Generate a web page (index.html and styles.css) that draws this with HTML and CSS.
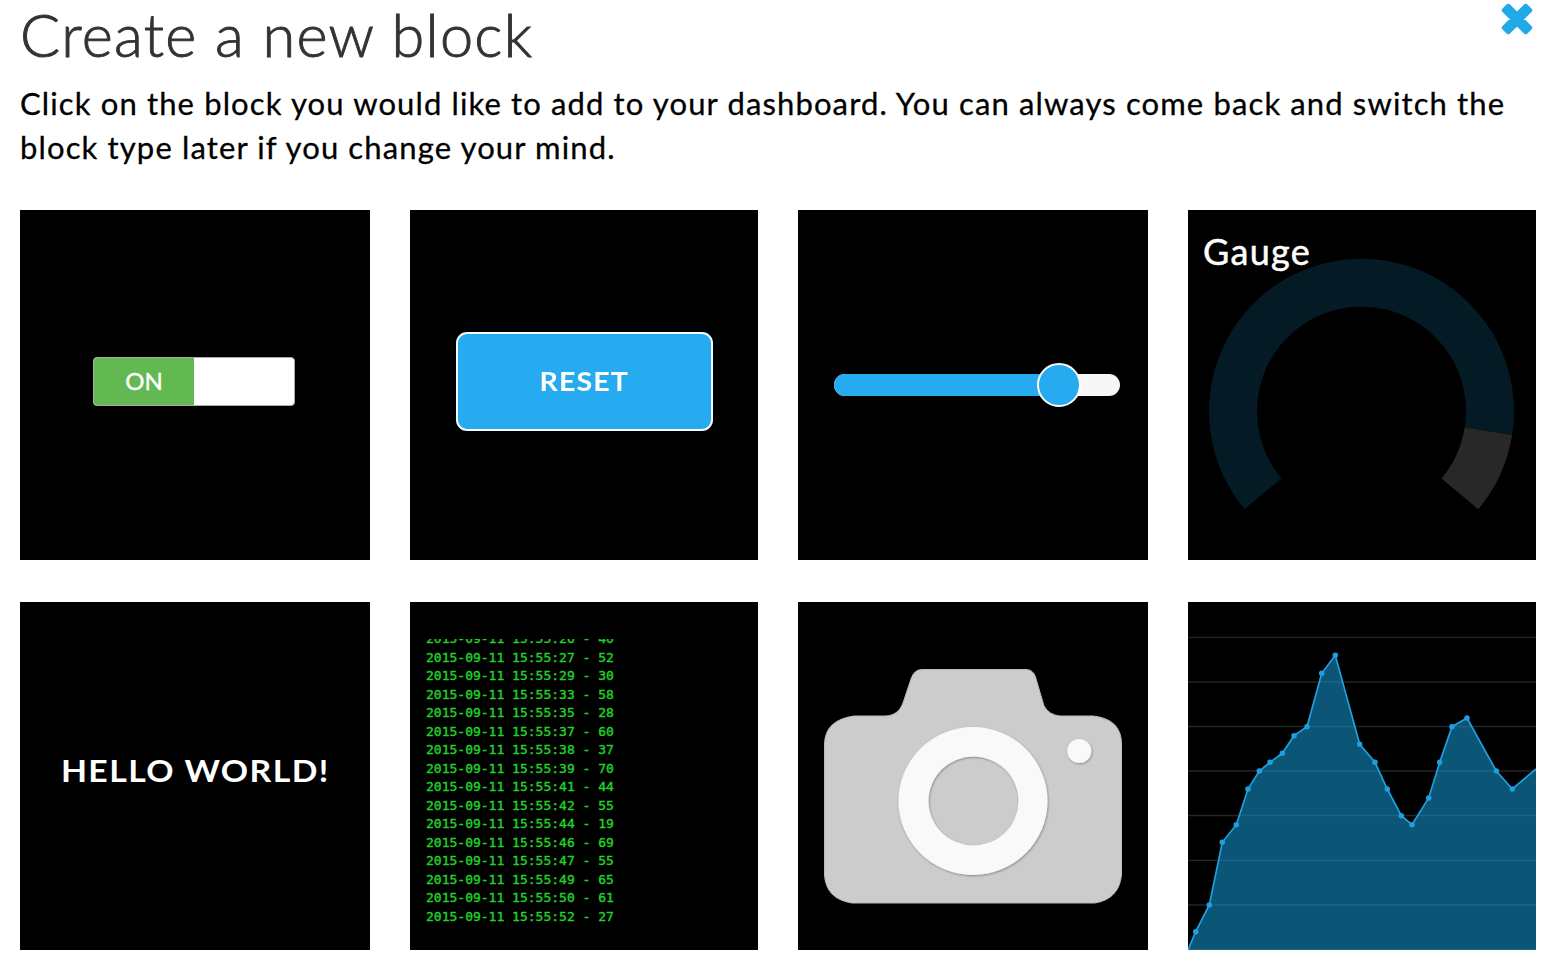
FILE: index.html
```html
<!DOCTYPE html>
<html lang="en">
<head>
<meta charset="utf-8">
<title>Create a new block</title>
<link rel="stylesheet" href="styles.css">
</head>
<body>
<main class="dialog">
  <header class="dialog-head">
    <h1 class="title">Create a new block</h1>
    <button class="close" aria-label="Close">
      <svg width="34" height="34" viewBox="0 0 34 34"><path d="M8.300 4.300 17 13 25.700 4.300 29.700 8.300 21 17 29.700 25.700 25.700 29.700 17 21 8.300 29.700 4.300 25.700 13 17 4.300 8.300Z" fill="#20aae8" stroke="#20aae8" stroke-width="5" stroke-linejoin="round"/></svg>
    </button>
  </header>
  <p class="intro">Click on the block you would like to add to your dashboard. You can always come back and switch the<br>block type later if you change your mind.</p>
  <section class="blocks">
    <div class="block toggle-block">
      <div class="toggle"><span class="toggle-on">ON</span></div>
    </div>
    <div class="block button-block">
      <div class="reset"><span class="reset-label">RESET</span></div>
    </div>
    <div class="block slider-block">
      <div class="track"><div class="fill"></div><div class="thumb"></div></div>
    </div>
    <div class="block gauge-block">
      <svg class="art" viewBox="0 0 348 350">
        <g transform="translate(173.500 201.200)">
          <path fill="#041a24" d="M-116.800 98A152.500 152.500 0 1 1 150.600 23.900L103.200 16.300A104.500 104.500 0 1 0-80 67.200Z"/>
          <path fill="#282828" d="M150.600 23.900A152.500 152.500 0 0 1 116.800 98L80 67.200A104.500 104.500 0 0 0 103.200 16.300Z"/>
        </g>
      </svg>
      <span class="gauge-name">Gauge</span>
    </div>
    <div class="block text-block"><span class="hello">HELLO WORLD!</span></div>
    <div class="block log-block">
      <pre class="log">2015-09-11 15:55:26 - 40
2015-09-11 15:55:27 - 52
2015-09-11 15:55:29 - 30
2015-09-11 15:55:33 - 58
2015-09-11 15:55:35 - 28
2015-09-11 15:55:37 - 60
2015-09-11 15:55:38 - 37
2015-09-11 15:55:39 - 70
2015-09-11 15:55:41 - 44
2015-09-11 15:55:42 - 55
2015-09-11 15:55:44 - 19
2015-09-11 15:55:46 - 69
2015-09-11 15:55:47 - 55
2015-09-11 15:55:49 - 65
2015-09-11 15:55:50 - 61
2015-09-11 15:55:52 - 27</pre>
    </div>
    <div class="block">
      <svg class="art" viewBox="0 0 350 348">
        <defs><filter id="soft" x="-10%" y="-10%" width="120%" height="120%"><feDropShadow dx=".7" dy="1" stdDeviation="1" flood-color="#000" flood-opacity=".35"/></filter></defs>
        <path fill="#ccc" stroke="#b9b9b9" stroke-width="1" d="M56 114H87C96 114 102 109 105 101L113 77Q116 67.500 124 67.500H228Q235 67.500 237.500 75L246 104Q251 113 262 114H295Q323.500 117 323.500 142V273Q321 297 297 301H54Q28 297 26.500 273V142Q27 118 56 114Z"/>
        <path filter="url(#soft)" fill="#f9f9f9" fill-rule="evenodd" d="M100.500 199a74.500 74 0 1 0 149 0a74.500 74 0 1 0-149 0ZM130.500 199a45 44.500 0 1 1 90 0a45 44.500 0 1 1-90 0Z"/>
        <circle filter="url(#soft)" cx="281.300" cy="149" r="12" fill="#f9f9f9"/>
      </svg>
    </div>
    <div class="block">
      <svg class="art" viewBox="0 0 348 348">
        <path stroke="#fff" stroke-opacity=".14" stroke-width="1.300" d="M0 35.300H348M0 80H348M0 124.500H348M0 169H348M0 213.500H348M0 258.300H348M0 303H348M0 347.300H348"/>
        <path fill="#149ad5" fill-opacity=".56" d="M0 348L7.700 329.700 21.300 303 34.300 240.300 48.300 222.700 60 187 71.300 169 82 160.300 94.300 151.300 106 133.700 119 124.700 133.700 71.300 147.300 53.300 171.700 142.300 187 160.300 199.300 187 213.300 213.700 224 222.700 240.700 196 251.700 160.300 264 124.700 279 116 308.300 169 324.300 187 348 167V348Z"/>
        <path class="series" d="M0 348L7.700 329.700 21.300 303 34.300 240.300 48.300 222.700 60 187 71.300 169 82 160.300 94.300 151.300 106 133.700 119 124.700 133.700 71.300 147.300 53.300 171.700 142.300 187 160.300 199.300 187 213.300 213.700 224 222.700 240.700 196 251.700 160.300 264 124.700 279 116 308.300 169 324.300 187 348 167"/>
        <path class="points" d="M7.700 329.700h0M21.300 303h0M34.300 240.300h0M48.300 222.700h0M60 187h0M71.300 169h0M82 160.300h0M94.300 151.300h0M106 133.700h0M119 124.700h0M133.700 71.300h0M147.300 53.300h0M171.700 142.300h0M187 160.300h0M199.300 187h0M213.300 213.700h0M224 222.700h0M240.700 196h0M251.700 160.300h0M264 124.700h0M279 116h0M308.300 169h0M324.300 187h0"/>
      </svg>
    </div>
  </section>
</main>
</body>
</html>
```
FILE: styles.css
```css
* { box-sizing: border-box; }
body {
  margin: 0;
  background: #fff;
  color: #000;
  font-family: Lato, "Liberation Sans", sans-serif;
  overflow: hidden;
}
.dialog { padding: 0 14px 0 20px; }
.dialog-head {
  display: flex;
  justify-content: space-between;
  align-items: flex-start;
  height: 81px;
}
.title {
  margin: 0;
  color: #333;
  font-size: 59.500px;
  font-weight: 300;
  line-height: 69px;
  letter-spacing: 1.250px;
  white-space: nowrap;
  -webkit-text-stroke: 0.900px #333;
}
.close {
  display: flex;
  margin: 2px 2px 0 0;
  padding: 0;
  border: 0;
  background: none;
}
.intro {
  margin: 0;
  height: 129px;
  font-size: 31px;
  line-height: 44px;
  letter-spacing: 1.130px;
  white-space: nowrap;
  -webkit-text-stroke: 0.300px #000;
}
.blocks {
  display: grid;
  grid-template-columns: 350px 348px 350px 348px;
  grid-template-rows: 350px 348px;
  column-gap: 40px;
  row-gap: 42px;
}
.blocks > :nth-child(4n + 3) { margin-left: 0; }
.block {
  position: relative;
  display: flex;
  overflow: hidden;
  background: #000;
  color: #fff;
}
.art {
  display: block;
  width: 100%;
  height: 100%;
  fill: none;
}
.toggle-block { padding: 147px 0 0 73px; }
.toggle {
  width: 202px;
  height: 49px;
  border: 1px solid #aaa;
  border-radius: 4px;
  background: #fff;
  overflow: hidden;
}
.toggle-on {
  display: block;
  width: 100px;
  height: 47px;
  background: #62b951;
  font-size: 24px;
  line-height: 46px;
  text-align: center;
  -webkit-text-stroke: 0.400px #fff;
}
.button-block { padding: 122px 0 0 46px; }
.reset {
  width: 257px;
  height: 99px;
  border: 2px solid #f4faff;
  border-radius: 11px;
  background: #26abf0;
  font-size: 27px;
  font-weight: 700;
  line-height: 94px;
  text-align: center;
}
.reset-label {
  display: inline-block;
  letter-spacing: 1px;
  transform: scaleX(1.060);
}
.slider-block { padding: 164px 0 0 36px; }
.track {
  position: relative;
  width: 286px;
  height: 22px;
  border-radius: 11px;
  background: #f7f7f7;
}
.fill {
  width: 225px;
  height: 22px;
  border-radius: 11px 0 0 11px;
  background: #26abf0;
}
.thumb {
  position: absolute;
  left: 203px;
  top: -11px;
  width: 44px;
  height: 44px;
  border: 2px solid #fff;
  border-radius: 50%;
  background: #26abf0;
}
.gauge-name {
  position: absolute;
  left: 15px;
  top: 19px;
  font-size: 36px;
  line-height: 44px;
  letter-spacing: 1.300px;
  -webkit-text-stroke: 0.500px #fff;
}
.text-block {
  align-items: center;
  justify-content: center;
}
.hello {
  font-size: 31px;
  font-weight: 700;
  letter-spacing: 1.300px;
  white-space: nowrap;
  transform: translateY(-6px) scaleX(1.090);
}
.log-block { padding: 37px 0 0 16px; }
.log {
  display: flex;
  align-items: flex-end;
  width: 200px;
  height: 287px;
  margin: 0;
  overflow: hidden;
  color: #22d12a;
  font: 13px/18.500px "DejaVu Sans Mono", monospace;
  -webkit-text-stroke: 0.400px #22d12a;
}
.series {
  stroke: #1f9fe0;
  stroke-width: 1.700;
}
.points {
  stroke: #1f9fe0;
  stroke-width: 5.500;
  stroke-linecap: round;
}
```
